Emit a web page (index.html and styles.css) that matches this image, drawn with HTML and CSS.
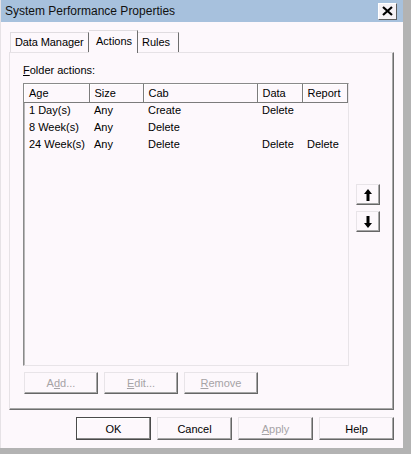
FILE: index.html
```html
<!DOCTYPE html>
<html lang="en">
<head>
  <meta charset="UTF-8">
  <title>System Performance Properties</title>
  <link rel="stylesheet" href="styles.css">
</head>
<body>
  <div class="dialog">
    <div class="titlebar">
      <span class="title">System Performance Properties</span>
      <button class="close-btn">
        <svg width="11" height="10" viewBox="0 0 11 10">
          <path d="M1 1 L10 9 M10 1 L1 9" stroke="#000" stroke-width="2.2"/>
        </svg>
      </button>
    </div>

    <div class="tabs">
      <div class="tab tab-first">Data Manager</div>
      <div class="tab tab-active">Actions</div>
      <div class="tab tab-rules">Rules</div>
    </div>

    <div class="panel">
      <div class="label"><u>F</u>older actions:</div>

      <div class="list-row">
        <div class="listview">
          <table>
            <thead>
              <tr>
                <th class="c-age">Age</th>
                <th class="c-size">Size</th>
                <th class="c-cab">Cab</th>
                <th class="c-data">Data</th>
                <th class="c-report">Report</th>
              </tr>
            </thead>
            <tbody>
              <tr><td>1 Day(s)</td><td>Any</td><td>Create</td><td>Delete</td><td></td></tr>
              <tr><td>8 Week(s)</td><td>Any</td><td>Delete</td><td></td><td></td></tr>
              <tr><td>24 Week(s)</td><td>Any</td><td>Delete</td><td>Delete</td><td>Delete</td></tr>
            </tbody>
          </table>
        </div>

        <div class="move-btns">
          <button class="btn arrow-btn">
            <svg width="8" height="12" viewBox="0 0 8 12">
              <path d="M4 0 L8 5 L5.5 5 L5.5 12 L2.5 12 L2.5 5 L0 5 Z" fill="#000"/>
            </svg>
          </button>
          <button class="btn arrow-btn">
            <svg width="8" height="12" viewBox="0 0 8 12">
              <path d="M4 12 L8 7 L5.5 7 L5.5 0 L2.5 0 L2.5 7 L0 7 Z" fill="#000"/>
            </svg>
          </button>
        </div>
      </div>

      <div class="action-btns">
        <button class="btn" disabled>A<u>d</u>d...</button>
        <button class="btn" disabled><u>E</u>dit...</button>
        <button class="btn" disabled><u>R</u>emove</button>
      </div>
    </div>

    <div class="footer">
      <button class="btn btn-default">OK</button>
      <button class="btn">Cancel</button>
      <button class="btn" disabled><u>A</u>pply</button>
      <button class="btn">Help</button>
    </div>
  </div>
</body>
</html>
```

FILE: styles.css
```css
body {
  margin: 0;
  background: #b3b3b3;
  font-family: 'Liberation Sans', Arial, sans-serif;
  font-size: 11px;
  color: #000;
}

.dialog {
  width: 403px;
  height: 448px;
  background: #fdf8fc;
  box-sizing: border-box;
  border-left: 1px solid #e6e2e6;
}

.titlebar {
  height: 22px;
  background: #a7c1dd;
  display: flex;
  align-items: center;
  justify-content: space-between;
  padding-left: 4px;
  padding-right: 6px;
}

.title {
  font-size: 12px;
  color: #101010;
}

.close-btn {
  width: 19px;
  height: 17px;
  padding: 0;
  background: #f6f2f6;
  border: 1px solid;
  border-color: #ffffff #5e5e5e #5e5e5e #ffffff;
  display: flex;
  align-items: center;
  justify-content: center;
}

.tabs {
  display: flex;
  align-items: flex-end;
  padding-left: 9px;
  margin-top: 8px;
  height: 22px;
}

.tab {
  height: 20px;
  line-height: 19px;
  padding-left: 4px;
  border-top: 1px solid #e0dce0;
  border-right: 1px solid #6e6e6e;
  box-sizing: border-box;
  white-space: nowrap;
}

.tab-first {
  width: 79px;
  border-left: 1px solid #e0dce0;
  letter-spacing: -0.1px;
}

.tab-active {
  width: 49px;
  height: 23px;
  line-height: 20px;
  padding-left: 7px;
  margin-bottom: -1px;
  background: #fdf8fc;
  position: relative;
  z-index: 1;
}

.tab-rules {
  width: 41px;
  padding-left: 4px;
}

.panel {
  width: 385px;
  height: 358px;
  margin-left: 8px;
  box-sizing: border-box;
  border: 1px solid;
  border-color: #e6e2e6 #6e6e6e #6e6e6e #e6e2e6;
  box-shadow: inset -1px -1px 0 #a8a8a8;
  padding: 11px 0 0 13px;
}

.label {
  height: 19px;
}

.list-row {
  display: flex;
  gap: 7px;
}

.listview {
  width: 326px;
  height: 283px;
  box-sizing: border-box;
  background: #fdf8fc;
  border: 1px solid;
  border-color: #8a8a8a #e8e4e8 #e8e4e8 #8a8a8a;
  box-shadow: inset 1px 1px 0 #b8b8b8;
}

table {
  border-collapse: collapse;
  table-layout: fixed;
}

th {
  height: 18px;
  box-sizing: border-box;
  padding: 0 0 0 5px;
  text-align: left;
  font-weight: normal;
  border-right: 1px solid #7c7c7c;
  border-bottom: 1px solid #7c7c7c;
  box-shadow: inset 1px 1px 0 #ffffff;
}

td {
  height: 17px;
  padding: 0 0 1px 5px;
  white-space: nowrap;
  line-height: 15px;
  box-sizing: border-box;
}

.c-age { width: 65px; }
.c-size { width: 54px; }
.c-cab { width: 114px; }
.c-data { width: 45px; }
.c-report { width: 45px; }

.move-btns {
  display: flex;
  flex-direction: column;
  gap: 6px;
  margin-top: 101px;
}

.btn {
  font-family: 'Liberation Sans', Arial, sans-serif;
  font-size: 11px;
  color: #000;
  width: 75px;
  height: 23px;
  padding: 0;
  background: #fdf8fc;
  border: 1px solid;
  border-color: #e8e4e8 #666666 #666666 #e8e4e8;
  box-shadow: inset -1px -1px 0 #a6a6a6;
}

.btn:disabled {
  color: #a6a3a6;
}

.arrow-btn {
  width: 24px;
  height: 21px;
  display: flex;
  align-items: center;
  justify-content: center;
}

.action-btns {
  display: flex;
  gap: 6px;
  margin-top: 6px;
  padding-left: 1px;
}

.action-btns .btn {
  width: 74px;
  height: 22px;
}

.footer {
  display: flex;
  justify-content: flex-end;
  gap: 6px;
  padding-right: 9px;
  margin-top: 7px;
}

.btn-default {
  border-color: #4a4a4a;
  box-shadow: inset -1px -1px 0 #8a8a8a, inset 1px 1px 0 #ffffff;
}
```
